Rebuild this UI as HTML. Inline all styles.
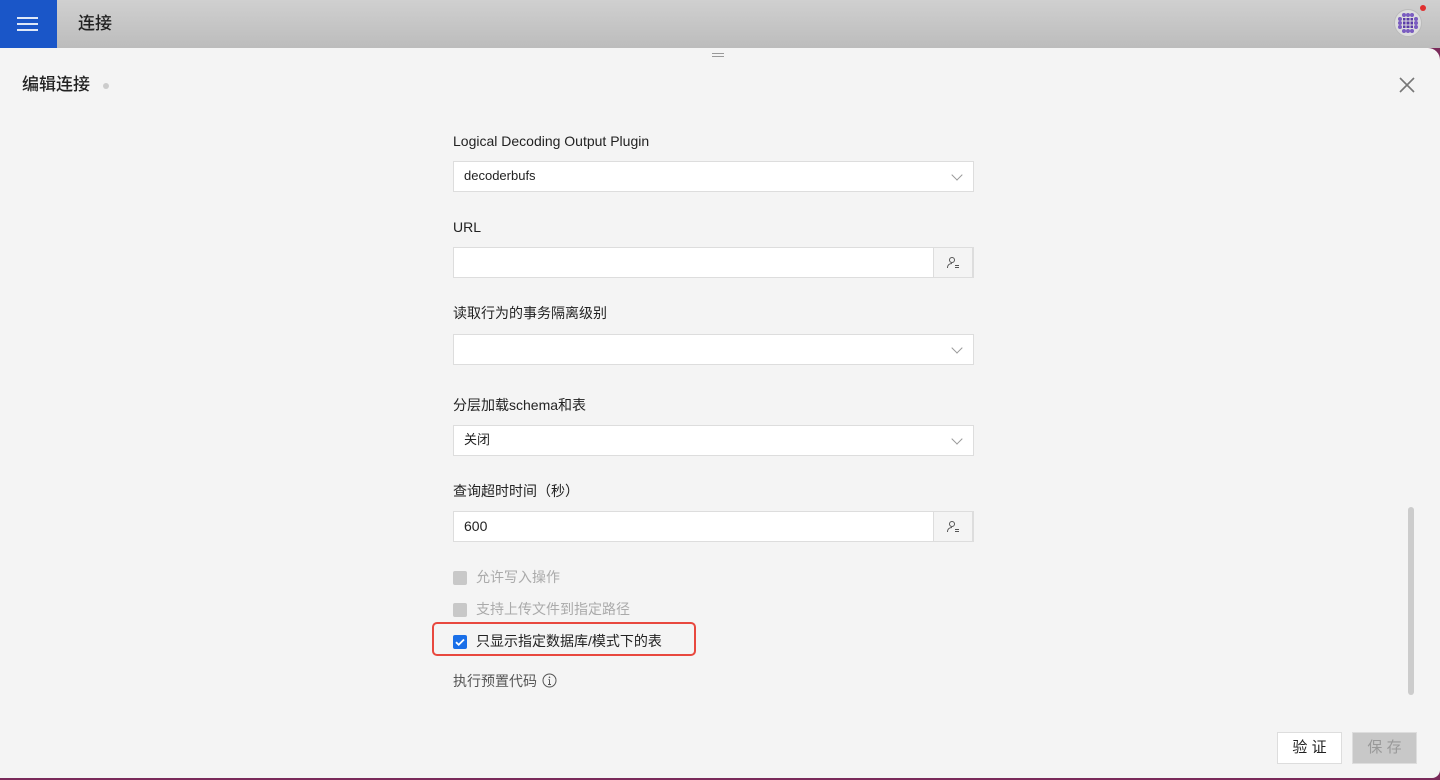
<!DOCTYPE html>
<html><head><meta charset="utf-8"><style>
*{box-sizing:border-box;margin:0;padding:0}
body{width:1440px;height:780px;overflow:hidden;background:#7a2a5a;font-family:"Liberation Sans","Noto Sans CJK SC",sans-serif;position:relative;line-height:1.2}
.top{position:absolute;left:0;top:0;width:1440px;height:48px;background:linear-gradient(#d0d0d0,#bcbcbc)}
.menu{position:absolute;left:0;top:0;width:57px;height:48px;background:#1a56c8}
.menu i{position:absolute;left:17px;width:21px;height:2px;background:#dfe8f8}
.ttl{position:absolute;left:78px;top:14px;font-size:17px;color:#222;font-weight:500}
.panel{position:absolute;left:0;top:48px;width:1440px;height:730px;background:#f4f4f4;border-radius:0 12px 8px 0}
.lbl{position:absolute;left:453px;font-size:14px;color:#222}
.inp{position:absolute;left:453px;width:521px;height:31px;background:#fff;border:1px solid #ddd;font-size:13px;color:#222;padding:6px 10px}
.chev{position:absolute;right:12px;top:9px;width:8px;height:8px;border-right:1.3px solid #999;border-bottom:1.3px solid #999;transform:rotate(45deg)}
.btn{position:absolute;right:0;top:-1px;width:40px;height:31px;border:1px solid #ddd;background:#f4f4f4}
.btn svg{position:absolute;left:12px;top:8px}
.cb{position:absolute;left:453px;width:14px;height:14px;background:#c8c8c8;border-radius:2px}
.ct{position:absolute;left:476px;font-size:14px;color:#aaa}
</style></head><body>
<div class="top">
<div class="menu"><i style="top:17px"></i><i style="top:23px"></i><i style="top:29px"></i></div>
<div class="ttl">连接</div>
<div style="position:absolute;left:1394px;top:9px;width:28px;height:28px;border-radius:50%;background:#ddd;border:1px solid #bbb"><svg style="position:absolute;left:0;top:0" width="26" height="26" viewBox="0 0 26 26"><g fill="#7a5cc0"><circle cx="9" cy="5" r="2"/><circle cx="13" cy="5" r="2"/><circle cx="17" cy="5" r="2"/><circle cx="5" cy="9" r="2"/><circle cx="21" cy="9" r="2"/><circle cx="5" cy="13" r="2"/><circle cx="21" cy="13" r="2"/><circle cx="5" cy="17" r="2"/><circle cx="21" cy="17" r="2"/><circle cx="9" cy="21" r="2"/><circle cx="13" cy="21" r="2"/><circle cx="17" cy="21" r="2"/></g><rect x="8" y="8" width="10" height="10" fill="#5a3aa8"/><path d="M11 8v10M15 8v10M8 11h10M8 15h10" stroke="#ddd" stroke-width="1"/></svg></div>
<div style="position:absolute;left:1420px;top:5px;width:6px;height:6px;border-radius:50%;background:#e03030"></div>
</div>
<div class="panel">
<div style="position:absolute;left:712px;top:5px;width:12px;height:4px;border-top:1px solid #999;border-bottom:1px solid #999"></div>
<div style="position:absolute;left:22px;top:27px;font-size:17px;color:#222;font-weight:500">编辑连接</div>
<div style="position:absolute;left:103px;top:35px;width:6px;height:6px;border-radius:50%;background:#ccc"></div>
<svg style="position:absolute;left:1399px;top:29px" width="16" height="16" viewBox="0 0 16 16"><path d="M1 1L15 15M15 1L1 15" stroke="#777" stroke-width="1.6"/></svg>
</div>
<div class="lbl" style="top:133px">Logical Decoding Output Plugin</div>
<div class="inp" style="top:161px">decoderbufs<span class="chev"></span></div>
<div class="lbl" style="top:219px">URL</div>
<div class="inp" style="top:247px"><span class="btn"><svg width="14" height="14" viewBox="0 0 14 14" fill="none" stroke="#555" stroke-width="1"><circle cx="6" cy="4" r="2.5"/><path d="M1.5 12c0-3 2-4.5 4.5-4.5M9 9.5h4M9 11.5h4"/></svg></span></div>
<div class="lbl" style="top:305px">读取行为的事务隔离级别</div>
<div class="inp" style="top:334px"><span class="chev"></span></div>
<div class="lbl" style="top:397px">分层加载schema和表</div>
<div class="inp" style="top:425px">关闭<span class="chev"></span></div>
<div class="lbl" style="top:483px">查询超时时间（秒）</div>
<div class="inp" style="top:511px;font-size:14px;padding-top:6px">600<span class="btn"><svg width="14" height="14" viewBox="0 0 14 14" fill="none" stroke="#555" stroke-width="1"><circle cx="6" cy="4" r="2.5"/><path d="M1.5 12c0-3 2-4.5 4.5-4.5M9 9.5h4M9 11.5h4"/></svg></span></div>
<div class="cb" style="top:571px"></div><div class="ct" style="top:569px">允许写入操作</div>
<div class="cb" style="top:603px"></div><div class="ct" style="top:601px">支持上传文件到指定路径</div>
<div style="position:absolute;left:432px;top:622px;width:264px;height:34px;border:2px solid #e8483e;border-radius:5px"></div>
<div class="cb" style="top:635px;background:#1a6fe8"><svg width="14" height="14" viewBox="0 0 14 14"><path d="M3 7.2l2.7 2.6L11 4.5" stroke="#fff" stroke-width="1.8" fill="none"/></svg></div>
<div class="ct" style="top:633px;color:#222">只显示指定数据库/模式下的表</div>
<div class="lbl" style="top:673px;color:#555">执行预置代码</div>
<svg style="position:absolute;left:542px;top:673px" width="15" height="15" viewBox="0 0 15 15"><circle cx="7.5" cy="7.5" r="6.5" fill="none" stroke="#555"/><path d="M7.5 6.5v5M6 11.5h3M6.5 6.5h1" stroke="#555"/><circle cx="7.5" cy="4.3" r=".8" fill="#555"/></svg>
<div style="position:absolute;left:1408px;top:507px;width:6px;height:188px;border-radius:3px;background:#ccc"></div>
<div style="position:absolute;left:1277px;top:732px;width:65px;height:32px;background:#fff;border:1px solid #ddd;font-size:15px;text-align:center;line-height:30px;color:#222">验 证</div>
<div style="position:absolute;left:1352px;top:732px;width:65px;height:32px;background:#c8c8c8;border:1px solid #ddd;font-size:15px;text-align:center;line-height:30px;color:#999">保 存</div>
</body></html>
